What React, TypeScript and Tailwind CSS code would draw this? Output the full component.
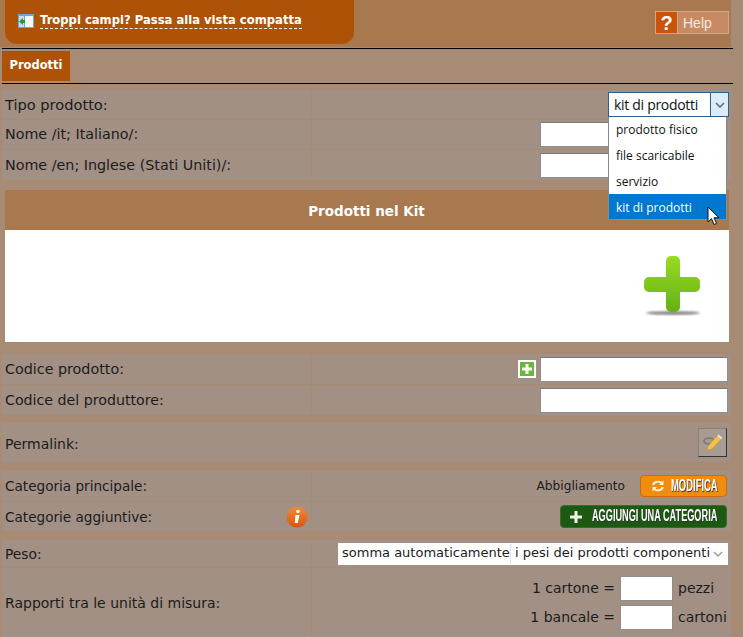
import React from 'react';

const Row: React.FC<{ label: React.ReactNode; h: number; children?: React.ReactNode; last?: boolean }> = ({ label, h, children, last }) => (
  <div
    className={`flex bg-[#a29084] ${last ? '' : 'border-b border-[#a98b72]'}`}
    style={{ height: h }}
  >
    <div className="w-[310px] shrink-0 flex items-center justify-between pl-[3px] pr-[3px] border-r border-[#a98b72]">
      {label}
    </div>
    <div className="flex-1 flex items-center justify-end pr-[3px]">{children}</div>
  </div>
);

const Label: React.FC<{ size: string; children: React.ReactNode }> = ({ size, children }) => (
  <span className={`${size} pt-[1px] whitespace-nowrap`}>{children}</span>
);

const TextBox = () => <div className="w-[188px] h-[25px] bg-white border border-[#8e8e8e] border-t-[#7a7a7a]" />;

const CondensedLabel: React.FC<{ text: string; w: string; scale: string }> = ({ text, w, scale }) => (
  <span className={`${w} block`}>
    <span className={`${scale} inline-block origin-left font-['Liberation_Sans',sans-serif] font-bold whitespace-nowrap text-white text-[16px] leading-[20px] [text-shadow:1px_1px_1px_#333]`}>
      {text}
    </span>
  </span>
);

const BigPlus = () => (
  <svg width="58" height="60" viewBox="0 0 58 60">
    <defs>
      <linearGradient id="gp" x1="0" y1="0" x2="0" y2="1">
        <stop offset="0" stopColor="#98dc20" />
        <stop offset="1" stopColor="#66b016" />
      </linearGradient>
      <filter id="bl"><feGaussianBlur stdDeviation="0.8" /></filter>
    </defs>
    <ellipse cx="29" cy="57" rx="27" ry="2" fill="#8a8a8a" filter="url(#bl)" />
    <path d="M22 5a5 5 0 0 1 5-5h4a5 5 0 0 1 5 5v16h15a5 5 0 0 1 5 5v5a5 5 0 0 1-5 5H36v15a5 5 0 0 1-5 5h-4a5 5 0 0 1-5-5V36H5a5 5 0 0 1-5-5v-5a5 5 0 0 1 5-5h17z" fill="url(#gp)" />
  </svg>
);

export default function App() {
  return (
    <div className="relative w-[743px] h-[637px] overflow-hidden bg-[#a78b75] font-['DejaVu_Sans',Verdana,sans-serif] text-[14px] text-[#1c1c1c]">
      {/* top band */}
      <div className="flex justify-between w-[731px] h-[47px] bg-[#a8784f]">
        <div className="ml-[5px] w-[349px] h-[44px] rounded-b-[12px] bg-[#ae5208] flex items-center gap-[6px] pl-[13px] pb-[3px]">
          <svg width="16" height="14" viewBox="0 0 16 14">
            <rect x="0" y="0" width="16" height="14" fill="#6fa6d8" />
            <rect x="7" y="2" width="8" height="11" fill="#f4f8fc" />
            <rect x="1" y="2" width="5" height="11" fill="#c8ddf0" />
            <path d="M1 7.5 5 4v2h2v3H5v2z" fill="#1f9a3a" />
          </svg>
          <a className="text-[11.6px] font-bold text-white border-b border-dashed border-white leading-[15px]">
            Troppi campi? Passa alla vista compatta
          </a>
        </div>
        <div className="mt-[11px] mr-[2px] w-[74px] h-[23px] flex border border-[#d0a888] bg-[#c88a62]">
          <span className="w-[22px] bg-[#c9530a] border-r border-[#d0a888] flex items-center justify-center text-white font-bold text-[20px] font-['Liberation_Sans',sans-serif]">?</span>
          <span className="pl-[5px] pt-[1px] text-[#f3ebe3] text-[14px] leading-[21px] font-['Liberation_Sans',sans-serif]">Help</span>
        </div>
      </div>

      {/* tab strip */}
      <div className="ml-[2px] w-[731px] mt-[1px] h-[36px] border-y border-black flex pt-[2px]">
        <div className="w-[68px] h-[30px] bg-[#ae5208] text-white font-bold text-[11.5px] flex items-center justify-center">Prodotti</div>
      </div>

      <div className="ml-[2px] w-[729px] mt-[6px] flex flex-col">
        <div className="flex flex-col">
          <Row label={<Label size="text-[14.6px]">Tipo prodotto:</Label>} h={30} />
          <Row label={<Label size="text-[14.3px]">Nome /it; Italiano/:</Label>} h={30}>
            <TextBox />
          </Row>
          <Row label={<Label size="text-[14.3px]">Nome /en; Inglese (Stati Uniti)/:</Label>} h={30} last>
            <TextBox />
          </Row>
        </div>

        {/* kit */}
        <div className="mt-[10px] ml-[3px] w-[724px] flex flex-col">
          <div className="h-[40px] bg-[#a8784f] flex items-center justify-center text-white font-bold text-[13.5px] pt-[2px] pr-[1px]">
            Prodotti nel Kit
          </div>
          <div className="h-[112px] bg-white flex justify-end items-start pt-[26px] pr-[27px]">
            <BigPlus />
          </div>
        </div>

        <div className="mt-[12px] flex flex-col">
          <Row label={<Label size="text-[14.3px]">Codice prodotto:</Label>} h={31}>
            <div className="mr-[4px] w-[18px] h-[18px] bg-[#6db33f] border-2 border-white flex items-center justify-center">
              <svg width="12" height="12" viewBox="0 0 12 12"><path d="M4.5 1h3v3.500H11v3H7.500V11h-3V7.500H1v-3h3.500z" fill="#f3fbe9" /></svg>
            </div>
            <TextBox />
          </Row>
          <Row label={<Label size="text-[14.2px]">Codice del produttore:</Label>} h={30} last>
            <TextBox />
          </Row>
        </div>

        <div className="mt-[8px] h-[39px] bg-[#a29084] flex items-center justify-between pl-[3px] pr-[4px]">
          <span className="text-[14px] pt-[3px]">Permalink:</span>
          <div className="mt-[-1px] w-[29px] h-[29px] bg-[#a89c92] border border-[#8a8078] border-r-[#333] border-b-[#333] flex items-center justify-center">
            <svg width="20" height="18" viewBox="0 0 20 18">
              <ellipse cx="6" cy="8" rx="5" ry="3" fill="none" stroke="#777" strokeWidth="1.6" />
              <path d="M5 13 14 3l4 3.500L9 16l-5 1.500z" fill="#f2c04e" stroke="#c48a20" strokeWidth="0.6" />
              <path d="M14 3l1.500-1.500 4 3.300L18 6.500z" fill="#e8e2d0" />
            </svg>
          </div>
        </div>

        <div className="mt-[9px] flex flex-col">
          <Row label={<Label size="text-[13.6px]">Categoria principale:</Label>} h={31}>
            <span className="text-[12.2px] mr-[15px]">Abbigliamento</span>
            <div className="mr-[1px] w-[87px] h-[22px] rounded-[4px] bg-[#f28c0f] border border-[#c56f10] flex items-center pl-[9px] gap-[5px] text-white">
              <svg width="16" height="14" viewBox="0 0 16 14">
                <path d="M2 6A6 5 0 0 1 12 3l1.500-1.500V6H9l1.500-1.500A3.600 3.200 0 0 0 4.500 6zM14 8A6 5 0 0 1 4 11l-1.500 1.500V8H7L5.500 9.500A3.600 3.200 0 0 0 11.500 8z" fill="#fdf3e0" />
              </svg>
              <CondensedLabel text="MODIFICA" w="w-[47px]" scale="scale-x-[0.59]" />
            </div>
          </Row>
          <Row
            label={
              <>
                <Label size="text-[13.6px]">Categorie aggiuntive:</Label>
                <svg width="22" height="22" viewBox="0 0 22 22">
                  <defs>
                    <linearGradient id="gi" x1="0" y1="0" x2="0" y2="1">
                      <stop offset="0" stopColor="#f08a3a" />
                      <stop offset="1" stopColor="#d9560c" />
                    </linearGradient>
                  </defs>
                  <circle cx="11" cy="11" r="10.5" fill="url(#gi)" />
                  <circle cx="12" cy="5.5" r="1.8" fill="#fff" />
                  <path d="M9.5 9h4L11.800 17h-3z" fill="#fff" />
                </svg>
              </>
            }
            h={29}
            last
          >
            <div className="mr-[1px] w-[167px] h-[23px] rounded-[4px] bg-[#1b5a10] border border-[#3a6a30] flex items-center pl-[8px] gap-[9px] text-white">
              <svg width="14" height="14" viewBox="0 0 14 14"><path d="M5.500 1h3v4.500H13v3H8.500V13h-3V8.500H1v-3h4.500z" fill="#eef5e8" /></svg>
              <CondensedLabel text="AGGIUNGI UNA CATEGORIA" w="w-[125px]" scale="scale-x-[0.573]" />
            </div>
          </Row>
        </div>

        <div className="mt-[9px] flex flex-col">
          <Row label={<Label size="text-[13.8px]">Peso:</Label>} h={28}>
            <div className="w-[390px] h-[22px] bg-white flex items-center justify-between pl-[4px] pr-[5px] text-[13px]">
              <span className="whitespace-nowrap">
                somma automaticamente<span className="inline-block w-[1px] h-[20px] bg-[#e4e4e4] align-middle" /> i pesi dei prodotti componenti
              </span>
              <svg width="10" height="6" viewBox="0 0 10 6"><path d="M1 1l4 4 4-4" fill="none" stroke="#9a9a9a" strokeWidth="1.4" /></svg>
            </div>
          </Row>
          <Row label={<Label size="text-[14px]">Rapporti tra le unità di misura:</Label>} h={69} last>
            <div className="flex flex-col gap-[4px] items-end">
              <div className="flex items-center">
                <span>1 cartone =</span>
                <div className="ml-[5px] w-[53px] h-[25px] bg-white border border-[#8e8e8e]" />
                <span className="ml-[5px] w-[50px]">pezzi</span>
              </div>
              <div className="flex items-center">
                <span>1 bancale =</span>
                <div className="ml-[5px] w-[53px] h-[25px] bg-white border border-[#8e8e8e]" />
                <span className="ml-[5px] w-[50px]">cartoni</span>
              </div>
            </div>
          </Row>
        </div>
      </div>

      {/* open select */}
      <div className="absolute left-[608px] top-[92px] w-[121px] font-['Open_Sans',sans-serif] text-[#111]">
        <div className="h-[25px] flex border border-[#2f5f8f] bg-white text-[14px]">
          <span className="flex-1 pl-[5px] leading-[23px] tracking-[-0.3px]">kit di prodotti</span>
          <span className="w-[18px] bg-[#dcebf8] border-l border-[#2f5f8f] flex items-center justify-center">
            <svg width="10" height="6" viewBox="0 0 10 6"><path d="M1 1l4 4 4-4" fill="none" stroke="#5a6a78" strokeWidth="1.5" /></svg>
          </span>
        </div>
        <div className="w-[119px] bg-white border border-[#8a8a8a] border-t-0 text-[12px]">
          <div className="h-[26px] pl-[7px] leading-[26px]">prodotto fisico</div>
          <div className="h-[26px] pl-[7px] leading-[26px]">file scaricabile</div>
          <div className="h-[25px] pl-[7px] leading-[26px]">servizio</div>
          <div className="h-[25px] pl-[7px] leading-[27px] bg-[#0078d0] text-white">kit di prodotti</div>
        </div>
      </div>

      {/* mouse pointer */}
      <svg className="absolute left-[707px] top-[206px]" width="14" height="20" viewBox="0 0 14 20">
        <path d="M1 1v15l3.500-3.300L7 18.500l2.600-1.100L7 11.800h5z" fill="#fff" stroke="#111" strokeWidth="1" />
      </svg>
    </div>
  );
}
